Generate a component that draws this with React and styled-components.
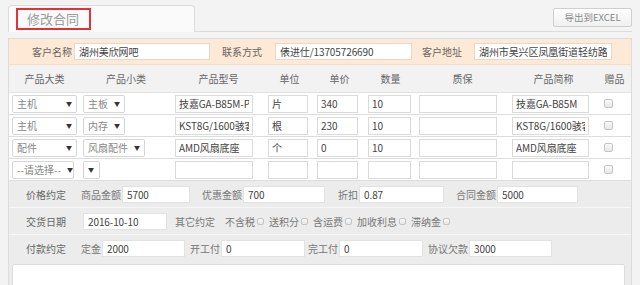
import React from "react";
import styled, { createGlobalStyle } from "styled-components";

const GlobalStyle = createGlobalStyle`
  body {
    margin: 0;
    background: #f3f3f3;
    font-family: "Noto Sans CJK SC", "Noto Sans", sans-serif;
    font-size: 10px;
    color: #555;
  }
`;

const columns = ["产品大类", "产品小类", "产品型号", "单位", "单价", "数量", "质保", "产品简称", "赠品"];

const items = [
  { big: "主机", small: "主板", model: "技嘉GA-B85M-PLUS", unit: "片", price: "340", qty: "10", short: "技嘉GA-B85M" },
  { big: "主机", small: "内存", model: "KST8G/1600骇客神条", unit: "根", price: "230", qty: "10", short: "KST8G/1600骇客神条" },
  { big: "配件", small: "风扇配件", model: "AMD风扇底座", unit: "个", price: "0", qty: "10", short: "AMD风扇底座" },
  { big: "--请选择--", bigW: 62, small: "", smallW: 17, model: "", unit: "", price: "", qty: "", short: "" },
];

export default function App() {
  return (
    <Page>
      <GlobalStyle />
      <TopBar>
        <Tab>
          <TitleBox>修改合同</TitleBox>
        </Tab>
        <ExportButton>导出到EXCEL</ExportButton>
      </TopBar>

      <Panel>
        <CustomerRow>
          <FieldLabel $w={63}>客户名称</FieldLabel>
          <TextInput $w={136} defaultValue="湖州美欣网吧" />
          <FieldLabel $w={52}>联系方式</FieldLabel>
          <TextInput $w={137} $ml={11} defaultValue="俵进仕/13705726690" />
          <FieldLabel $w={50}>客户地址</FieldLabel>
          <TextInput $w={138} $ml={10} defaultValue="湖州市吴兴区凤凰街道轻纺路45号" />
        </CustomerRow>

        <HeaderRow>
          {columns.map((c) => (
            <HeadCell key={c}>{c}</HeadCell>
          ))}
        </HeaderRow>

        {items.map((it, i) => (
          <DataRow key={i}>
            <Cell><Select $w={it.bigW || 65}><span>{it.big}</span><Arrow>▼</Arrow></Select></Cell>
            <Cell><Select $w={it.smallW}>{it.small && <span>{it.small}</span>}<Arrow>▼</Arrow></Select></Cell>
            <Cell><GridInput $w={78} defaultValue={it.model} /></Cell>
            <Cell><GridInput $w={40} defaultValue={it.unit} /></Cell>
            <Cell><GridInput $w={41} defaultValue={it.price} /></Cell>
            <Cell><GridInput $w={43} defaultValue={it.qty} /></Cell>
            <Cell><GridInput $w={78} defaultValue="" /></Cell>
            <Cell><GridInput $w={77} defaultValue={it.short} /></Cell>
            <Cell $pl={6}><Check $size={9} /></Cell>
          </DataRow>
        ))}

        <Terms>
          <TermRow>
            <RowLabel $w={55}>价格约定</RowLabel>
            <InlineLabel>商品金额</InlineLabel>
            <TermInput $w={68} $mr={12} defaultValue="5700" />
            <InlineLabel>优惠金额</InlineLabel>
            <TermInput $w={82} $mr={13} defaultValue="700" />
            <InlineLabel>折扣</InlineLabel>
            <TermInput $w={85} $mr={12} defaultValue="0.87" />
            <InlineLabel>合同金额</InlineLabel>
            <TermInput $w={81} defaultValue="5000" />
          </TermRow>
          <TermRow>
            <RowLabel $w={57}>交货日期</RowLabel>
            <TermInput $w={84} $mr={8} defaultValue="2016-10-10" />
            <InlineLabel $mr={10}>其它约定</InlineLabel>
            {["不含税", "送积分", "含运费", "加收利息", "滞纳金"].map((t) => (
              <Option key={t}>
                {t}
                <Check $size={7} />
              </Option>
            ))}
          </TermRow>
          <TermRow>
            <RowLabel $w={55}>付款约定</RowLabel>
            <InlineLabel>定金</InlineLabel>
            <TermInput $w={83} $mr={5} defaultValue="2000" />
            <InlineLabel>开工付</InlineLabel>
            <TermInput $w={84} $mr={3} defaultValue="0" />
            <InlineLabel>完工付</InlineLabel>
            <TermInput $w={84} $mr={5} defaultValue="0" />
            <InlineLabel>协议欠款</InlineLabel>
            <TermInput $w={83} defaultValue="3000" />
          </TermRow>
          <NoteArea />
        </Terms>
      </Panel>
    </Page>
  );
}

const Page = styled.div`
  width: 624px;
  padding: 5px 8px 0;
  overflow: hidden;
  height: 280px;
`;

const TopBar = styled.div`
  display: flex;
  justify-content: space-between;
  align-items: flex-start;
  height: 26px;
  border-bottom: 1px solid #dcdcdc;
`;

const Tab = styled.div`
  box-sizing: border-box;
  width: 187px;
  height: 27px;
  padding: 2px 0 0 7px;
  background: #fafafa;
  border: 1px solid #dcdcdc;
  border-bottom: none;
  border-radius: 4px 4px 0 0;
`;

const TitleBox = styled.div`
  box-sizing: border-box;
  width: 75px;
  height: 22px;
  padding-left: 9px;
  border: 2px solid #e0323a;
  font-size: 13px;
  line-height: 18px;
  color: #9a9a9a;
`;

const ExportButton = styled.div`
  box-sizing: border-box;
  margin-top: 3px;
  width: 79px;
  height: 19px;
  border: 1px solid #cfcfcf;
  border-radius: 2px;
  background: linear-gradient(#ffffff, #efefef);
  font-size: 9.5px;
  line-height: 17px;
  text-align: center;
  color: #888;
`;

const Panel = styled.div`
  margin-top: 6px;
  border: 1px solid #dcdcdc;
  background: #fff;
`;

const CustomerRow = styled.div`
  display: flex;
  align-items: center;
  height: 25px;
  background: #fde9d5;
  border-bottom: 1px solid #f1dcc8;
`;

const FieldLabel = styled.div`
  width: ${(p) => p.$w}px;
  text-align: right;
  margin-right: 2px;
  color: #666;
`;

const inputFont = `
  font-family: "Noto Sans CJK SC", "Noto Sans", sans-serif;
  font-size: 10px;
  font-weight: 400;
  letter-spacing: -0.1px;
  color: #444;
  outline: none;
`;

const TextInput = styled.input.attrs({ readOnly: true })`
  box-sizing: border-box;
  width: ${(p) => p.$w}px;
  height: 17px;
  margin-left: ${(p) => p.$ml || 0}px;
  padding: 0 4px;
  border: 1px solid #e8d8c8;
  background: #fff;
  ${inputFont}
`;

const gridCols = "71px 92px 93px 49px 51px 51px 93px 89px 1fr";

const HeaderRow = styled.div`
  display: grid;
  grid-template-columns: ${gridCols};
  height: 27px;
  align-items: center;
  background: #f2f2f2;
  border-bottom: 1px solid #e2e2e2;
`;

const HeadCell = styled.div`
  text-align: center;
  color: #666;
`;

const DataRow = styled.div`
  display: grid;
  grid-template-columns: ${gridCols};
  height: 21px;
  align-items: center;
  border-bottom: 1px solid #dddddd;
`;

const Cell = styled.div`
  display: flex;
  align-items: center;
  padding-left: ${(p) => p.$pl || 3}px;
`;

const Select = styled.div`
  box-sizing: border-box;
  display: flex;
  align-items: center;
  justify-content: space-between;
  gap: 6px;
  width: ${(p) => (p.$w ? `${p.$w}px` : "auto")};
  height: 18px;
  padding: 0 4px;
  border: 1px solid #d6d6d6;
  border-radius: 2px;
  background: #fff;
  color: #888;
  white-space: nowrap;
`;

const Arrow = styled.span`
  font-size: 6px;
  color: #333;
`;

const GridInput = styled.input.attrs({ readOnly: true })`
  box-sizing: border-box;
  width: ${(p) => p.$w}px;
  height: 18px;
  padding: 0 3px;
  border: 1px solid #dadada;
  background: #fff;
  ${inputFont}
`;

const Check = styled.span`
  display: inline-block;
  box-sizing: border-box;
  width: ${(p) => p.$size}px;
  height: ${(p) => p.$size}px;
  border: 1px solid #c4c4c4;
  border-radius: 2px;
  background: linear-gradient(#fafafa, #e6e6e6);
`;

const Terms = styled.div`
  background: #ececec;
  padding-bottom: 20px;
`;

const TermRow = styled.div`
  display: flex;
  align-items: center;
  height: 26px;
  padding-left: 17px;
  & + & {
    border-top: 1px solid #f7f7f7;
  }
`;

const RowLabel = styled.div`
  width: ${(p) => p.$w}px;
  flex: none;
  color: #666;
`;

const InlineLabel = styled.div`
  margin-right: ${(p) => p.$mr || 1}px;
  color: #777;
  white-space: nowrap;
`;

const TermInput = styled.input.attrs({ readOnly: true })`
  box-sizing: border-box;
  width: ${(p) => p.$w}px;
  height: 17px;
  margin-right: ${(p) => p.$mr || 0}px;
  padding: 0 4px;
  border: 1px solid #e2e2e2;
  background: #fff;
  ${inputFont}
`;

const Option = styled.div`
  display: flex;
  align-items: center;
  gap: 2px;
  margin-right: 5px;
  color: #777;
  white-space: nowrap;
`;

const NoteArea = styled.div`
  margin: 3px 6px 0 3px;
  height: 50px;
  border: 1px solid #dcdcdc;
  border-radius: 2px;
  background: #fff;
`;
